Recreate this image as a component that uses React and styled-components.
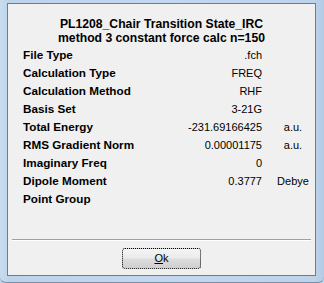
import React from "react";
import styled, { createGlobalStyle } from "styled-components";

const Global = createGlobalStyle`
  html, body { margin: 0; padding: 0; background: #bcd3ea; }
  body { font-family: "Liberation Sans", Arial, sans-serif; }
`;

const Frame = styled.div`
  box-sizing: border-box;
  width: 324px;
  height: 283px;
  padding: 3px 8px 6px 7px;
  background: linear-gradient(90deg, #c9dcef 0%, #bcd3ea 3%, #c3d8ee 50%, #bcd3ea 97%, #b3cbe4 100%);
  border-bottom: 1px solid #7a8ea6;
  border-radius: 0 0 6px 6px;
  display: flex;
`;

const Panel = styled.div`
  box-sizing: border-box;
  flex: 1;
  border: 1px solid #6e7c8c;
  background: #f0f0f0;
  display: flex;
  flex-direction: column;
  padding-top: 13px;
  color: #000;
  font-size: 11px;
`;

const Title = styled.div`
  font-weight: bold;
  font-size: 12.2px;
  text-align: center;
  line-height: 14px;
  margin-bottom: 1px;
`;

const Grid = styled.div`
  display: grid;
  grid-template-columns: 150px 78px 40px;
  column-gap: 11px;
  grid-auto-rows: 18px;
  align-items: center;
  padding-left: 15px;
  line-height: 18px;
`;

const Label = styled.div`
  font-weight: bold;
  font-size: 11.7px;
  white-space: nowrap;
`;

const Value = styled.div`
  text-align: right;
  white-space: nowrap;
`;

const Unit = styled.div`
  text-align: center;
  white-space: nowrap;
`;

const Separator = styled.div`
  margin: 31px 4px 0;
  border-top: 1px solid #a0a0a0;
  border-bottom: 1px solid #ffffff;
`;

const ButtonRow = styled.div`
  display: flex;
  justify-content: center;
  margin-top: 7px;
`;

const Button = styled.button`
  box-sizing: border-box;
  width: 79px;
  height: 21px;
  padding: 0;
  border: 1px dotted #000;
  border-radius: 3px;
  background: linear-gradient(180deg, #f4f4f4 0%, #ebebeb 48%, #dddddd 52%, #cfcfcf 100%);
  font-family: "Liberation Sans", Arial, sans-serif;
  font-size: 11px;
  color: #000;
  line-height: 19px;
  u { text-decoration: underline; }
`;

const rows = [
  ["File Type", ".fch", ""],
  ["Calculation Type", "FREQ", ""],
  ["Calculation Method", "RHF", ""],
  ["Basis Set", "3-21G", ""],
  ["Total Energy", "-231.69166425", "a.u."],
  ["RMS Gradient Norm", "0.00001175", "a.u."],
  ["Imaginary Freq", "0", ""],
  ["Dipole Moment", "0.3777", "Debye"],
  ["Point Group", "", ""],
];

export default function App() {
  return (
    <>
      <Global />
      <Frame>
        <Panel>
          <Title>
            PL1208_Chair Transition State_IRC
            <br />
            method 3 constant force calc n=150
          </Title>
          <Grid>
            {rows.map(([l, v, u]) => (
              <React.Fragment key={l}>
                <Label>{l}</Label>
                <Value>{v}</Value>
                <Unit>{u}</Unit>
              </React.Fragment>
            ))}
          </Grid>
          <Separator />
          <ButtonRow>
            <Button>
              <u>O</u>k
            </Button>
          </ButtonRow>
        </Panel>
      </Frame>
    </>
  );
}
